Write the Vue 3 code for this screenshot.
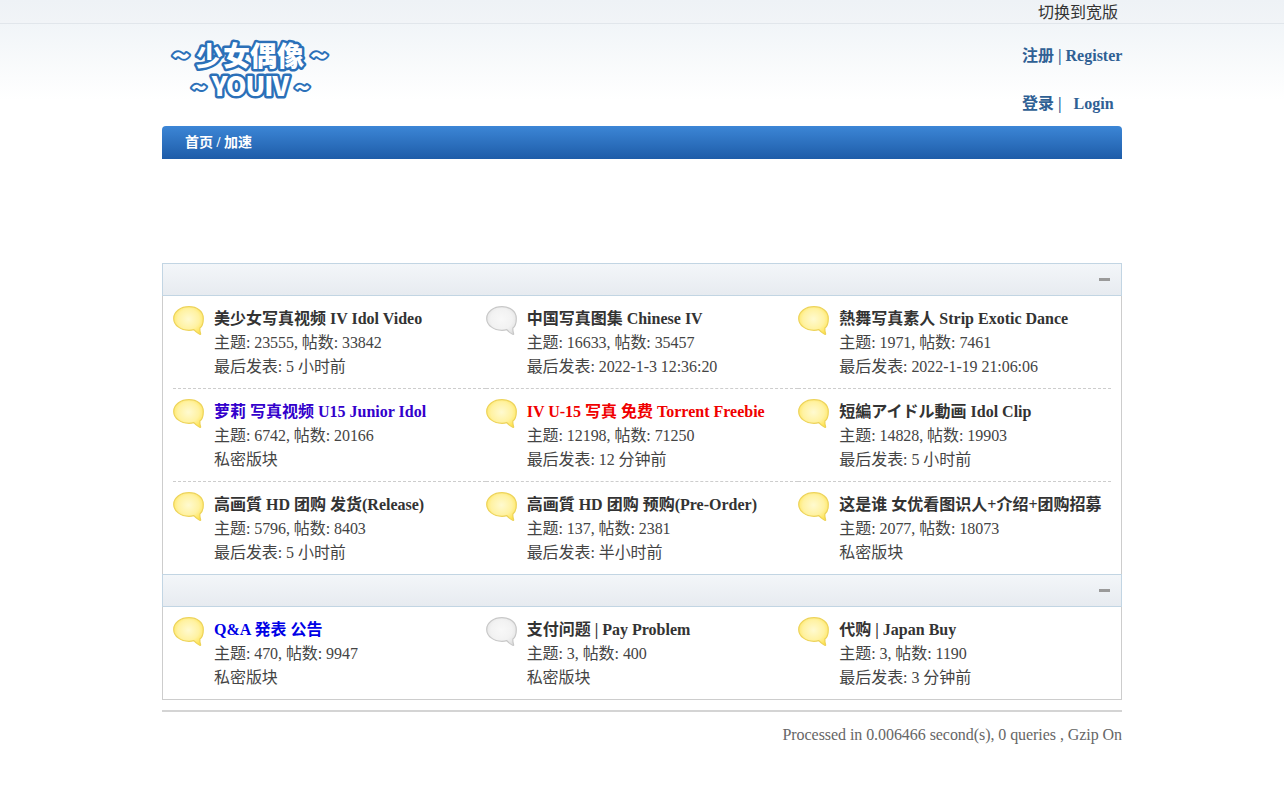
<script setup>
const groups = [
  [
    { t: '美少女写真视频 IV Idol Video', s: '主题: 23555, 帖数: 33842', l: '最后发表: 5 小时前', on: true },
    { t: '中国写真图集 Chinese IV', s: '主题: 16633, 帖数: 35457', l: '最后发表: 2022-1-3 12:36:20', on: false },
    { t: '熱舞写真素人 Strip Exotic Dance', s: '主题: 1971, 帖数: 7461', l: '最后发表: 2022-1-19 21:06:06', on: true },
    { t: '萝莉 写真视频 U15 Junior Idol', s: '主题: 6742, 帖数: 20166', l: '私密版块', on: true, c: 'violet' },
    { t: 'IV U-15 写真 免费 Torrent Freebie', s: '主题: 12198, 帖数: 71250', l: '最后发表: 12 分钟前', on: true, c: 'red' },
    { t: '短編アイドル動画 Idol Clip', s: '主题: 14828, 帖数: 19903', l: '最后发表: 5 小时前', on: true },
    { t: '高画質 HD 团购 发货(Release)', s: '主题: 5796, 帖数: 8403', l: '最后发表: 5 小时前', on: true },
    { t: '高画質 HD 团购 预购(Pre-Order)', s: '主题: 137, 帖数: 2381', l: '最后发表: 半小时前', on: true },
    { t: '这是谁 女优看图识人+介绍+团购招募', s: '主题: 2077, 帖数: 18073', l: '私密版块', on: true }
  ],
  [
    { t: 'Q&A 発表 公告', s: '主题: 470, 帖数: 9947', l: '私密版块', on: true, c: 'blue' },
    { t: '支付问题 | Pay Problem', s: '主题: 3, 帖数: 400', l: '私密版块', on: false },
    { t: '代购 | Japan Buy', s: '主题: 3, 帖数: 1190', l: '最后发表: 3 分钟前', on: true }
  ]
]
</script>

<template>
  <div class="page">
    <div class="topbar">
      <div class="wrap topbar-in"><a class="switch">切换到宽版</a></div>
    </div>
    <div class="wrap">
      <header class="head">
        <svg class="logo" width="176" height="78" viewBox="0 0 176 78">
          <g class="lg">
            <text x="88" y="30" text-anchor="middle" class="l1"><tspan class="t1" dy="1">~</tspan><tspan dx="6" dy="-1">少女偶像</tspan><tspan class="t1" dx="6" dy="1">~</tspan></text>
            <text x="88" y="60" text-anchor="middle" class="l2"><tspan class="t2" dy="1">~</tspan><tspan dx="6" dy="-1">YOUIV</tspan><tspan class="t2" dx="6" dy="1">~</tspan></text>
          </g>
        </svg>
        <div class="links">
          <a>注册 | Register</a>
          <a class="login">登录 |&nbsp;&nbsp; Login&nbsp;&nbsp;</a>
        </div>
      </header>
      <nav class="nav">首页 / 加速</nav>
      <div class="spacer"></div>
      <main class="board">
        <section v-for="(g, i) in groups" :key="i">
          <div class="cat"><span class="minus"></span></div>
          <div class="rows">
            <div v-for="f in g" :key="f.t" class="cell">
              <svg class="bubble" width="32" height="30" viewBox="0 0 32 30">
                <defs>
                  <radialGradient :id="'b' + (f.on ? 'y' : 'g') + i" cx="0.5" cy="0.45" r="0.6">
                    <stop offset="0" :stop-color="f.on ? '#fffad0' : '#f8f8f8'" />
                    <stop offset="0.6" :stop-color="f.on ? '#fff2a2' : '#f2f2f2'" />
                    <stop offset="1" :stop-color="f.on ? '#ffe34f' : '#e0e0e0'" />
                  </radialGradient>
                </defs>
                <path
                  d="M16 .7C7.6.7.7 5.7.7 12.4c0 6.7 6.9 11.900 15.300 11.900 1.700 0 3.300-.2 4.800-.6 1.500 1.800 3.700 3.400 5.900 4.600.7.300 1.100-.1.900-.7-.6-1.800-.9-3.700-.7-5.600 2.900-2.100 3.400-6 3.400-9.600C30.300 5.700 24.400.7 16 .7Z"
                  :fill="`url(#b${f.on ? 'y' : 'g'}${i})`"
                  :stroke="f.on ? '#edd35a' : '#c8c8c8'"
                  stroke-width="1.200"
                />
              </svg>
              <div class="info">
                <div class="title" :class="f.c">{{ f.t }}</div>
                <div class="meta">{{ f.s }}</div>
                <div class="meta">{{ f.l }}</div>
              </div>
            </div>
          </div>
        </section>
      </main>
      <footer class="foot">Processed in 0.006466 second(s), 0 queries , Gzip On</footer>
    </div>
  </div>
</template>

<style>
html, body { margin: 0; background: #fff; }
</style>

<style scoped>
.page {
  min-height: 799px;
  font: 16px/24px "Liberation Serif", "Noto Sans CJK SC", serif;
  color: #444;
  background: linear-gradient(#f1f5f8, #ffffff 76px) no-repeat 0 24px;
}
.wrap { width: 960px; margin: 0 auto; }
.topbar {
  height: 23px;
  border-bottom: 1px solid #e1e6eb;
  background: linear-gradient(#eef2f6, #f1f4f7);
}
.topbar-in { display: flex; justify-content: flex-end; }
.switch { color: #333; line-height: 25px; padding-right: 4px; }
.head { height: 102px; display: flex; justify-content: space-between; }
.logo { margin-top: 12px; align-self: flex-start; }
.lg text {
  font-family: "Noto Sans CJK SC", "Liberation Sans", sans-serif;
  font-weight: 900;
  fill: #fff;
  stroke: #2b70b8;
  paint-order: stroke fill;
  stroke-linejoin: round;
}
.l1 { font-size: 27px; stroke-width: 5px; }
.l2 { font-size: 26px; stroke-width: 5px; letter-spacing: -1px; }
.t1 { font-size: 30px; stroke-width: 4px; }
.t2 { font-size: 26px; stroke-width: 4px; }
.links {
  width: 100px;
  padding-top: 20px;
  display: flex;
  flex-direction: column;
  gap: 24px;
  font-weight: 700;
  color: #2f6094;
  white-space: nowrap;
}
.nav {
  height: 33px;
  padding-left: 23px;
  line-height: 33px;
  font-size: 14px;
  font-weight: 700;
  color: #fff;
  border-radius: 4px 4px 0 0;
  background: linear-gradient(#3c86d6, #1e5ca8);
}
.spacer { height: 104px; }
.board { border: 1px solid #cdcdcd; border-top: 0; }
.cat {
  height: 31px;
  margin: 0 -1px;
  border: 1px solid #c2d5e3;
  background: linear-gradient(#f3f6f9, #e7ebf0);
  display: flex;
  align-items: center;
  justify-content: flex-end;
  padding-right: 11px;
}
.minus { width: 11px; height: 3px; background: #9a9a9a; }
.rows {
  margin: 0 10px;
  display: grid;
  grid-template-columns: repeat(3, 1fr);
}
.cell {
  display: flex;
  gap: 9px;
  padding: 10px 0;
  height: 72px;
  border-bottom: 1px dashed #cdcdcd;
}
.cell:nth-last-child(-n+3) { border-bottom: 0; }
.bubble { flex: none; }
.info { white-space: nowrap; padding-top: 1px; }
.meta { letter-spacing: -0.06px; }
.title { font-weight: 700; color: #333; }
.violet { color: #3300cc; }
.red { color: #f00000; }
.blue { color: #0000e6; }
.foot {
  margin-top: 10px;
  border-top: 2px solid #d4d4d4;
  padding-top: 11px;
  text-align: right;
  color: #666;
  letter-spacing: -0.06px;
}
</style>
